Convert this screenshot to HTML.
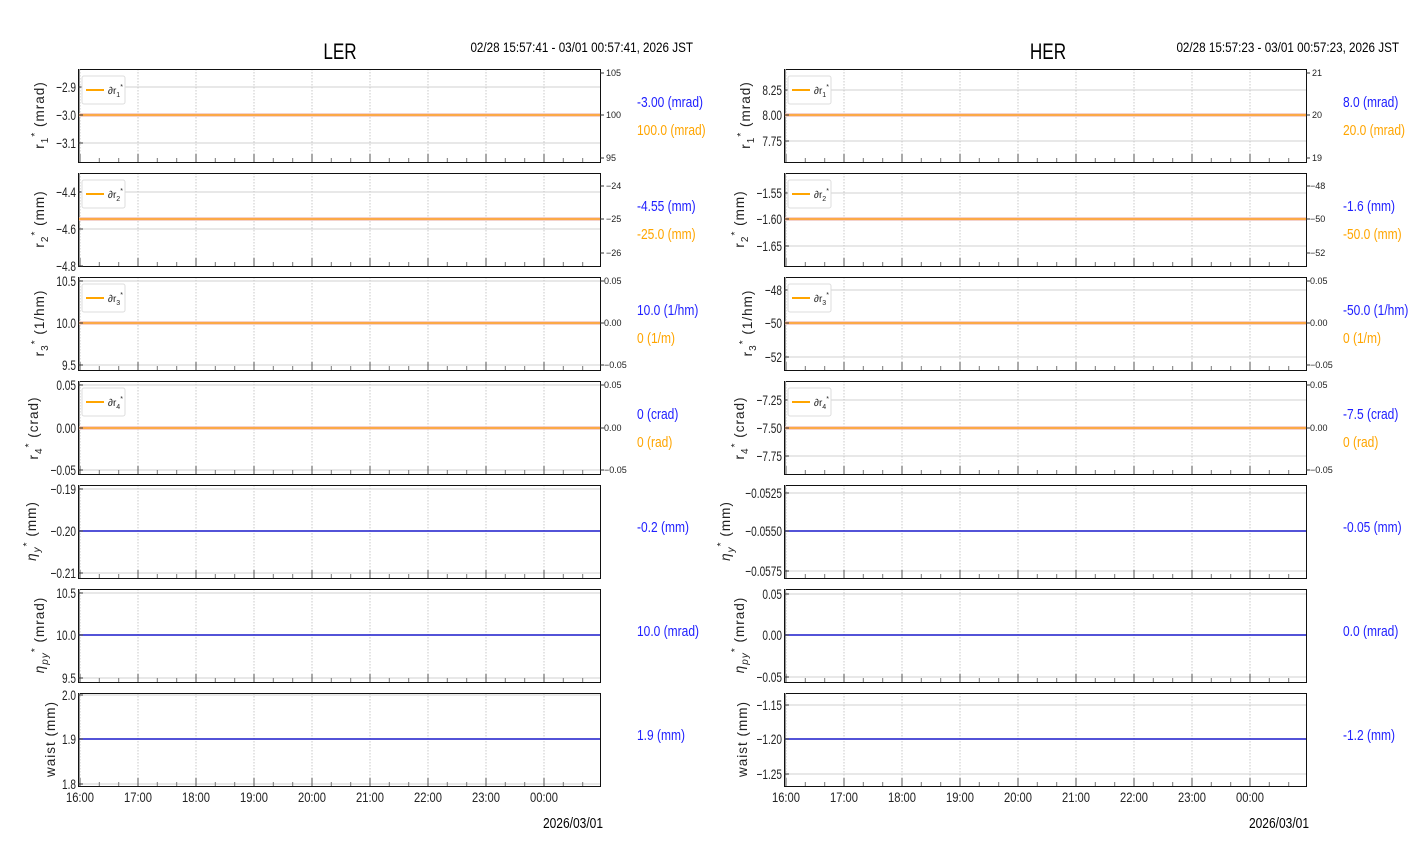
<!DOCTYPE html>
<html><head><meta charset="utf-8"><style>
body{margin:0;background:#fff;width:1412px;height:864px;overflow:hidden}
svg{display:block}
text{font-family:"Liberation Sans",sans-serif;fill:#222}
.t{font-size:14px;text-anchor:end}
.s{font-size:9px}
.yl{font-family:"DejaVu Sans",sans-serif;font-size:13.5px;text-anchor:middle;letter-spacing:1px}
.b{fill:#2020ff;font-size:15px}
.o{fill:#ffa500;font-size:15px}
.hg{stroke:#d0d0d0;stroke-width:1}
</style></head><body>
<svg width="1412" height="864" viewBox="0 0 1412 864" xmlns="http://www.w3.org/2000/svg">
<defs>
<g id="fr">
<path d="M2 0V93M60 0V93M118 0V93M176 0V93M234 0V93M292 0V93M350 0V93M408 0V93M466 0V93" stroke="#c8c8c8" stroke-dasharray="1.5,1.5" stroke-width="1"/>
<path d="M2 93v-8M60 93v-8M118 93v-8M176 93v-8M234 93v-8M292 93v-8M350 93v-8M408 93v-8M466 93v-8" stroke="#555" stroke-width="1"/>
<path d="M21.3 93v-4M40.7 93v-4M79.3 93v-4M98.7 93v-4M137.3 93v-4M156.7 93v-4M195.3 93v-4M214.7 93v-4M253.3 93v-4M272.7 93v-4M311.3 93v-4M330.7 93v-4M369.3 93v-4M388.7 93v-4M427.3 93v-4M446.7 93v-4M485.3 93v-4M504.7 93v-4" stroke="#777" stroke-width="1"/>
<rect x="0.5" y="0.5" width="522" height="93" fill="none" stroke="#111" stroke-width="1"/>
<line x1="1.5" y1="0" x2="1.5" y2="93" stroke="#999"/>
</g>
<g id="lg"><rect x="4" y="7" width="43" height="28" rx="2" fill="#fff" stroke="#ddd"/><line x1="8" y1="21" x2="26" y2="21" stroke="#ffa500" stroke-width="2"/></g>
</defs>

<text transform="translate(340,59) scale(0.78,1)" style="font-size:22px;text-anchor:middle;fill:#000">LER</text>
<text transform="translate(693,52) scale(0.835,1)" style="font-size:14px;text-anchor:end;fill:#000">02/28 15:57:41 - 03/01 00:57:41, 2026 JST</text>
<text transform="translate(1048,59) scale(0.78,1)" style="font-size:22px;text-anchor:middle;fill:#000">HER</text>
<text transform="translate(1399,52) scale(0.835,1)" style="font-size:14px;text-anchor:end;fill:#000">02/28 15:57:23 - 03/01 00:57:23, 2026 JST</text>

<g class="hg">
<path d="M78 87H600M78 143H600M78 192H600M78 229H600M78 281H600M78 365H600M78 385H600M78 470H600M78 489H600M78 573H600M78 593H600M78 678H600M78 695H600M78 784H600"/>
<path d="M784 90H1306M784 141H1306M784 193H1306M784 246H1306M784 290H1306M784 357H1306M784 400H1306M784 456H1306M784 493H1306M784 571H1306M784 594H1306M784 677H1306M784 705H1306M784 774H1306"/>
</g>
<use href="#fr" x="78" y="69"/><use href="#fr" x="78" y="173"/><use href="#fr" x="78" y="277"/><use href="#fr" x="78" y="381"/><use href="#fr" x="78" y="485"/><use href="#fr" x="78" y="589"/><use href="#fr" x="78" y="693"/>
<use href="#fr" x="784" y="69"/><use href="#fr" x="784" y="173"/><use href="#fr" x="784" y="277"/><use href="#fr" x="784" y="381"/><use href="#fr" x="784" y="485"/><use href="#fr" x="784" y="589"/><use href="#fr" x="784" y="693"/>

<path d="M79 115H600M79 219H600M79 323H600M79 428H600M785 115H1306M785 219H1306M785 323H1306M785 428H1306" stroke="#f0c4bc" stroke-width="3.5"/>
<path d="M79 115H600M79 219H600M79 323H600M79 428H600M785 115H1306M785 219H1306M785 323H1306M785 428H1306" stroke="#ffa020" stroke-width="1.4"/>
<path d="M79 531H600M79 635H600M79 739H600M785 531H1306M785 635H1306M785 739H1306" stroke="#1a1acc" stroke-width="1.6"/>

<path d="M600 73h4M600 115h4M600 158h4M600 186h4M600 219h4M600 253h4M600 281h4M600 323h4M600 365h4M600 385h4M600 428h4M600 470h4M1306 73h4M1306 115h4M1306 158h4M1306 186h4M1306 219h4M1306 253h4M1306 281h4M1306 323h4M1306 365h4M1306 385h4M1306 428h4M1306 470h4" stroke="#333"/>
<g class="s">
<text x="606" y="76">105</text><text x="606" y="118">100</text><text x="606" y="161">95</text>
<text x="606" y="189">−24</text><text x="606" y="222">−25</text><text x="606" y="256">−26</text>
<text x="604" y="284">0.05</text><text x="604" y="326">0.00</text><text x="604" y="368">−0.05</text>
<text x="604" y="388">0.05</text><text x="604" y="431">0.00</text><text x="604" y="473">−0.05</text>
<text x="1312" y="76">21</text><text x="1312" y="118">20</text><text x="1312" y="161">19</text>
<text x="1310" y="189">−48</text><text x="1310" y="222">−50</text><text x="1310" y="256">−52</text>
<text x="1310" y="284">0.05</text><text x="1310" y="326">0.00</text><text x="1310" y="368">−0.05</text>
<text x="1310" y="388">0.05</text><text x="1310" y="431">0.00</text><text x="1310" y="473">−0.05</text>
</g>

<path d="M78 87h5M78 115h5M78 143h5M78 192h5M78 229h5M78 266h5M78 281h5M78 323h5M78 365h5M78 385h5M78 428h5M78 470h5M78 489h5M78 531h5M78 573h5M78 593h5M78 635h5M78 678h5M78 695h5M78 739h5M78 784h5M784 90h5M784 115h5M784 141h5M784 193h5M784 219h5M784 246h5M784 290h5M784 323h5M784 357h5M784 400h5M784 428h5M784 456h5M784 493h5M784 531h5M784 571h5M784 594h5M784 635h5M784 677h5M784 705h5M784 739h5M784 774h5" stroke="#333"/>
<g class="t" transform="translate(76,0) scale(0.72,1)">
<text x="0" y="92">−2.9</text><text x="0" y="120">−3.0</text><text x="0" y="148">−3.1</text>
<text x="0" y="197">−4.4</text><text x="0" y="234">−4.6</text><text x="0" y="271">−4.8</text>
<text x="0" y="286">10.5</text><text x="0" y="328">10.0</text><text x="0" y="370">9.5</text>
<text x="0" y="390">0.05</text><text x="0" y="433">0.00</text><text x="0" y="475">−0.05</text>
<text x="0" y="494">−0.19</text><text x="0" y="536">−0.20</text><text x="0" y="578">−0.21</text>
<text x="0" y="598">10.5</text><text x="0" y="640">10.0</text><text x="0" y="683">9.5</text>
<text x="0" y="700">2.0</text><text x="0" y="744">1.9</text><text x="0" y="789">1.8</text>
</g>
<g class="t" transform="translate(782,0) scale(0.72,1)">
<text x="0" y="95">8.25</text><text x="0" y="120">8.00</text><text x="0" y="146">7.75</text>
<text x="0" y="198">−1.55</text><text x="0" y="224">−1.60</text><text x="0" y="251">−1.65</text>
<text x="0" y="295">−48</text><text x="0" y="328">−50</text><text x="0" y="362">−52</text>
<text x="0" y="405">−7.25</text><text x="0" y="433">−7.50</text><text x="0" y="461">−7.75</text>
<text x="0" y="498">−0.0525</text><text x="0" y="536">−0.0550</text><text x="0" y="576">−0.0575</text>
<text x="0" y="599">0.05</text><text x="0" y="640">0.00</text><text x="0" y="682">−0.05</text>
<text x="0" y="710">−1.15</text><text x="0" y="744">−1.20</text><text x="0" y="779">−1.25</text>
</g>

<use href="#lg" x="78" y="69"/><use href="#lg" x="78" y="173"/><use href="#lg" x="78" y="277"/><use href="#lg" x="78" y="381"/>
<use href="#lg" x="784" y="69"/><use href="#lg" x="784" y="173"/><use href="#lg" x="784" y="277"/><use href="#lg" x="784" y="381"/>
<g style="font-size:10px">
<text x="108" y="94">∂r<tspan dy="3" font-size="7">1</tspan><tspan dy="-8" font-size="7">*</tspan></text>
<text x="108" y="198">∂r<tspan dy="3" font-size="7">2</tspan><tspan dy="-8" font-size="7">*</tspan></text>
<text x="108" y="302">∂r<tspan dy="3" font-size="7">3</tspan><tspan dy="-8" font-size="7">*</tspan></text>
<text x="108" y="406">∂r<tspan dy="3" font-size="7">4</tspan><tspan dy="-8" font-size="7">*</tspan></text>
<text x="814" y="94">∂r<tspan dy="3" font-size="7">1</tspan><tspan dy="-8" font-size="7">*</tspan></text>
<text x="814" y="198">∂r<tspan dy="3" font-size="7">2</tspan><tspan dy="-8" font-size="7">*</tspan></text>
<text x="814" y="302">∂r<tspan dy="3" font-size="7">3</tspan><tspan dy="-8" font-size="7">*</tspan></text>
<text x="814" y="406">∂r<tspan dy="3" font-size="7">4</tspan><tspan dy="-8" font-size="7">*</tspan></text>
</g>

<g class="yl">
<text transform="translate(44,115) rotate(-90)">r<tspan font-size="10" dy="4">1</tspan><tspan font-size="10" dy="-10">*</tspan><tspan dy="6"> (mrad)</tspan></text>
<text transform="translate(44,219) rotate(-90)">r<tspan font-size="10" dy="4">2</tspan><tspan font-size="10" dy="-10">*</tspan><tspan dy="6"> (mm)</tspan></text>
<text transform="translate(44,323) rotate(-90)">r<tspan font-size="10" dy="4">3</tspan><tspan font-size="10" dy="-10">*</tspan><tspan dy="6"> (1/hm)</tspan></text>
<text transform="translate(38,428) rotate(-90)">r<tspan font-size="10" dy="4">4</tspan><tspan font-size="10" dy="-10">*</tspan><tspan dy="6"> (crad)</tspan></text>
<text transform="translate(36,531) rotate(-90)"><tspan font-style="italic">η</tspan><tspan font-size="10" dy="4" font-style="italic">y</tspan><tspan font-size="10" dy="-10">*</tspan><tspan dy="6"> (mm)</tspan></text>
<text transform="translate(44,635) rotate(-90)"><tspan font-style="italic">η</tspan><tspan font-size="10" dy="4" font-style="italic">py</tspan><tspan font-size="10" dy="-10">*</tspan><tspan dy="6"> (mrad)</tspan></text>
<text transform="translate(55,739) rotate(-90)">waist (mm)</text>
<text transform="translate(750,115) rotate(-90)">r<tspan font-size="10" dy="4">1</tspan><tspan font-size="10" dy="-10">*</tspan><tspan dy="6"> (mrad)</tspan></text>
<text transform="translate(744,219) rotate(-90)">r<tspan font-size="10" dy="4">2</tspan><tspan font-size="10" dy="-10">*</tspan><tspan dy="6"> (mm)</tspan></text>
<text transform="translate(752,323) rotate(-90)">r<tspan font-size="10" dy="4">3</tspan><tspan font-size="10" dy="-10">*</tspan><tspan dy="6"> (1/hm)</tspan></text>
<text transform="translate(744,428) rotate(-90)">r<tspan font-size="10" dy="4">4</tspan><tspan font-size="10" dy="-10">*</tspan><tspan dy="6"> (crad)</tspan></text>
<text transform="translate(730,531) rotate(-90)"><tspan font-style="italic">η</tspan><tspan font-size="10" dy="4" font-style="italic">y</tspan><tspan font-size="10" dy="-10">*</tspan><tspan dy="6"> (mm)</tspan></text>
<text transform="translate(744,635) rotate(-90)"><tspan font-style="italic">η</tspan><tspan font-size="10" dy="4" font-style="italic">py</tspan><tspan font-size="10" dy="-10">*</tspan><tspan dy="6"> (mrad)</tspan></text>
<text transform="translate(747,739) rotate(-90)">waist (mm)</text>
</g>

<g transform="translate(637,0) scale(0.8,1)">
<text class="b" x="0" y="107">-3.00 (mrad)</text><text class="o" x="0" y="135">100.0 (mrad)</text>
<text class="b" x="0" y="211">-4.55 (mm)</text><text class="o" x="0" y="239">-25.0 (mm)</text>
<text class="b" x="0" y="315">10.0 (1/hm)</text><text class="o" x="0" y="343">0 (1/m)</text>
<text class="b" x="0" y="419">0 (crad)</text><text class="o" x="0" y="447">0 (rad)</text>
<text class="b" x="0" y="532">-0.2 (mm)</text>
<text class="b" x="0" y="636">10.0 (mrad)</text>
<text class="b" x="0" y="740">1.9 (mm)</text>
</g>
<g transform="translate(1343,0) scale(0.8,1)">
<text class="b" x="0" y="107">8.0 (mrad)</text><text class="o" x="0" y="135">20.0 (mrad)</text>
<text class="b" x="0" y="211">-1.6 (mm)</text><text class="o" x="0" y="239">-50.0 (mm)</text>
<text class="b" x="0" y="315">-50.0 (1/hm)</text><text class="o" x="0" y="343">0 (1/m)</text>
<text class="b" x="0" y="419">-7.5 (crad)</text><text class="o" x="0" y="447">0 (rad)</text>
<text class="b" x="0" y="532">-0.05 (mm)</text>
<text class="b" x="0" y="636">0.0 (mrad)</text>
<text class="b" x="0" y="740">-1.2 (mm)</text>
</g>

<g style="font-size:14px;text-anchor:middle" transform="scale(0.8,1)">
<text x="100" y="802">16:00</text><text x="172.5" y="802">17:00</text><text x="245" y="802">18:00</text><text x="317.5" y="802">19:00</text><text x="390" y="802">20:00</text><text x="462.5" y="802">21:00</text><text x="535" y="802">22:00</text><text x="607.5" y="802">23:00</text><text x="680" y="802">00:00</text>
<text x="982.5" y="802">16:00</text><text x="1055" y="802">17:00</text><text x="1127.5" y="802">18:00</text><text x="1200" y="802">19:00</text><text x="1272.5" y="802">20:00</text><text x="1345" y="802">21:00</text><text x="1417.5" y="802">22:00</text><text x="1490" y="802">23:00</text><text x="1562.5" y="802">00:00</text>
</g>
<text transform="translate(603,828) scale(0.8,1)" style="font-size:15px;text-anchor:end;fill:#000">2026/03/01</text>
<text transform="translate(1309,828) scale(0.8,1)" style="font-size:15px;text-anchor:end;fill:#000">2026/03/01</text>
</svg>
</body></html>
